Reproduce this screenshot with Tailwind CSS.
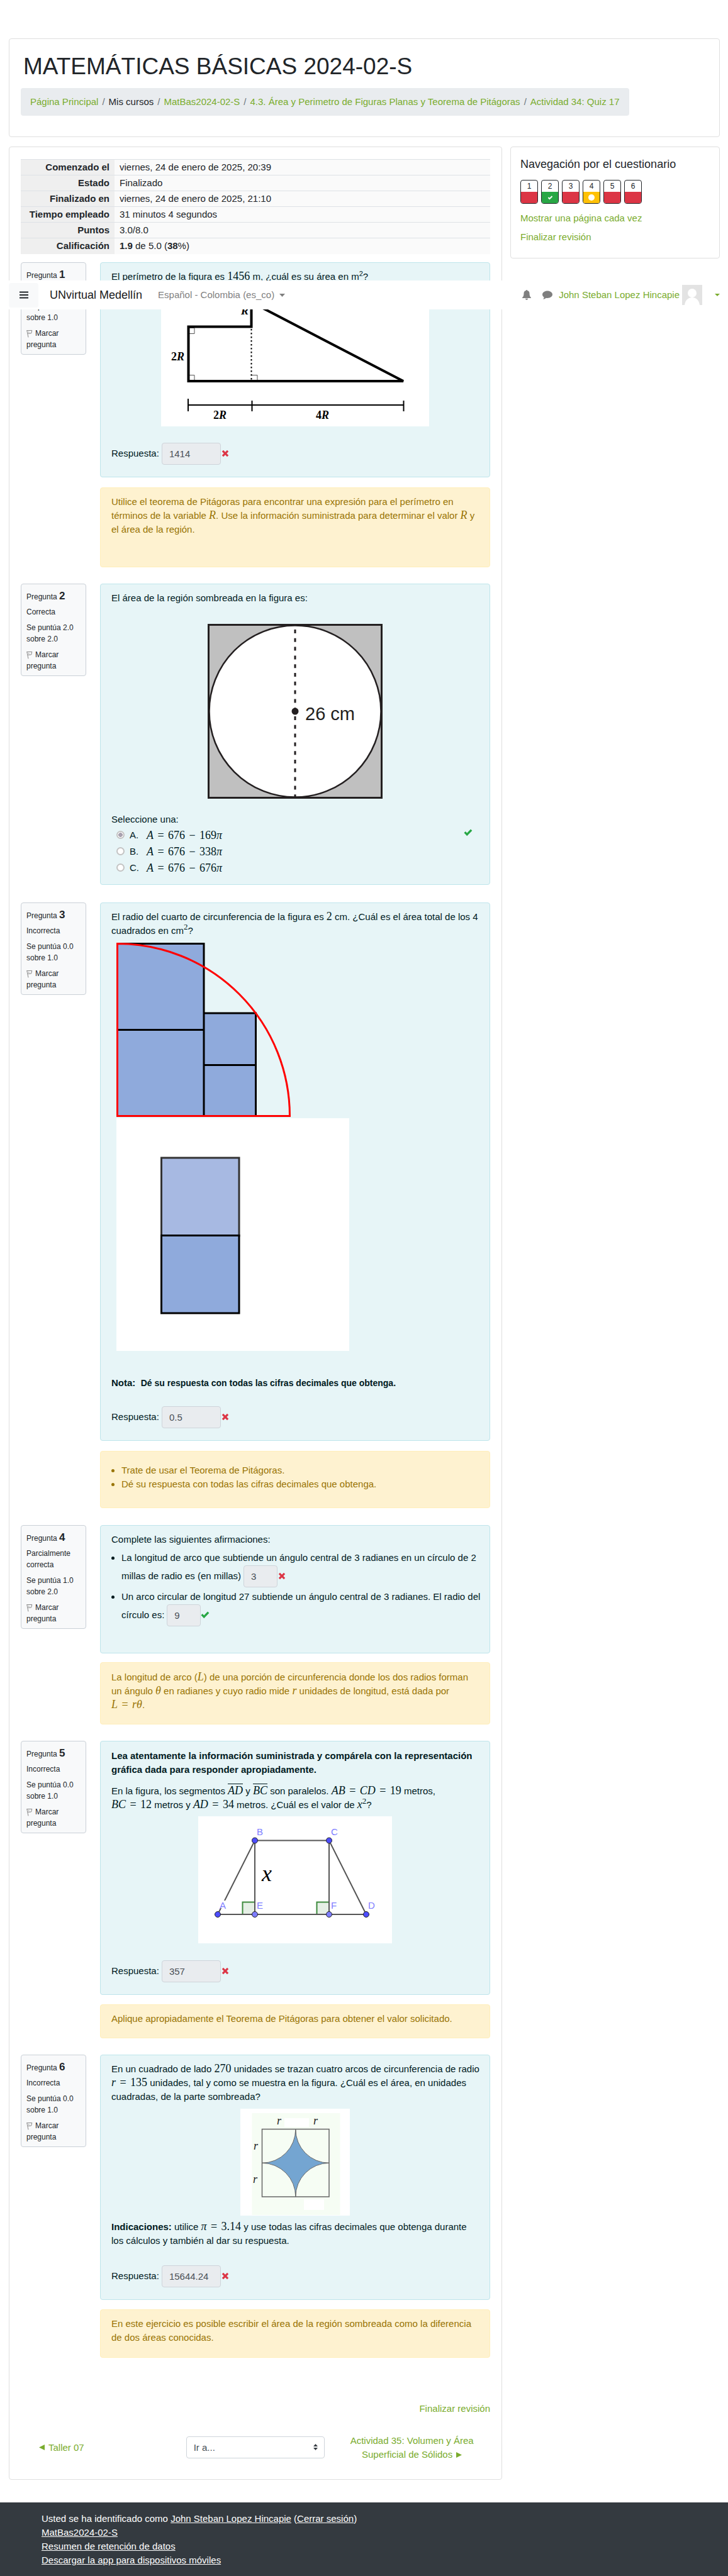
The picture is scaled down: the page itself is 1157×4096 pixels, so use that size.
<!DOCTYPE html>
<html lang="es">
<head>
<meta charset="utf-8">
<title>Actividad 34: Quiz 17</title>
<script src="https://cdn.jsdelivr.net/npm/@tailwindcss/browser@4"></script>
</head>
<body class="bg-white font-['Liberation_Sans',Arial,sans-serif] text-[15px] leading-[22px] text-[#212529]">
<svg class="hidden" aria-hidden="true">
  <symbol id="cross" viewBox="0 0 12 12"><path d="M3 0.8 6 3.8 9 0.8 11.2 3 8.2 6 11.2 9 9 11.2 6 8.2 3 11.2 0.8 9 3.8 6 0.8 3Z" fill="currentColor"/></symbol>
  <symbol id="check" viewBox="0 0 14 12"><path d="M0.5 6.3 2.8 4 5.2 6.4 11 0.6 13.4 2.8 5.2 11.2Z" fill="currentColor"/></symbol>
  <symbol id="flag" viewBox="0 0 10 13"><path d="M0.7 1 3 12.4M1 1.6 8.8 1.4 7.6 6 2.2 6.4M3.6 3.4 4 5.2" fill="none" stroke="#888" stroke-width="1"/></symbol>
</svg>
<div class="relative pt-[61px]">

<nav class="absolute inset-x-0 top-[446px] z-10 flex h-[46px] items-center bg-white pl-[14px] pr-[13px]">
  <button type="button" aria-label="Panel lateral" class="flex h-[39px] w-[47px] items-center justify-center rounded bg-[#f8f9fa]">
    <svg class="h-3 w-[14px]" viewBox="0 0 14 12"><path d="M0 1.5H14M0 6H14M0 10.5H14" stroke="#212529" stroke-width="2"/></svg>
  </button>
  <a href="#" class="ml-[18px] text-lg text-[#191919]">UNvirtual Medellín</a>
  <a href="#" class="ml-[25px] flex items-center gap-2 text-[#7f7f7f]">Español - Colombia (es_co)
    <svg class="h-[5px] w-[9px]" viewBox="0 0 9 5"><path d="M0 0H9L4.5 5Z" fill="currentColor"/></svg></a>
  <div class="ml-auto flex items-center">
    <button type="button" aria-label="Notificaciones" class="mr-[18px]"><svg class="h-4 w-[14px]" viewBox="0 0 14 16"><path d="M7 0C7.700 0 8 .5 8 1.100 10.300 1.600 11.500 3.300 11.500 5.500 11.500 9.500 12.600 11 14 12.200V13H0V12.200C1.400 11 2.500 9.500 2.500 5.500 2.500 3.300 3.700 1.600 6 1.100 6 .5 6.300 0 7 0ZM5 13.700H9C9 15 8.100 15.800 7 15.800 5.900 15.800 5 15 5 13.700Z" fill="#7f7f7f"/></svg></button>
    <button type="button" aria-label="Mensajes" class="mr-[10px]"><svg class="h-[14px] w-4" viewBox="0 0 16 14"><path d="M8 .5C12.400.5 16 3 16 6.200S12.400 11.900 8 11.900C7.300 11.900 6.600 11.800 5.900 11.700 4.600 12.900 3 13.500 1.200 13.700 2 12.800 2.500 11.800 2.600 10.600 1 9.500 0 8 0 6.200 0 3 3.600.5 8 .5Z" fill="#7f7f7f"/></svg></button>
    <a href="#" class="flex items-center gap-1 text-[#7aac2e]">John Steban Lopez Hincapie
      <svg class="h-8 w-8" viewBox="0 0 32 32"><path d="M0 0H32V32H0Z" fill="#e3e3e3"/><circle cx="16" cy="13" r="7" fill="#fff"/><path d="M4 32C5 24 10 20 16 20S27 24 28 32Z" fill="#fff"/></svg>
      <svg class="ml-4 h-1 w-2" viewBox="0 0 8 4"><path d="M0 0H8L4 4Z" fill="currentColor"/></svg></a>
  </div>
</nav>

<div class="pl-[14px] pr-[13px]">
<header class="rounded border border-[#dfdfdf] px-[18px] pb-[33px] pt-[22px]">
  <h1 class="mb-3 pl-1 text-[37px] leading-[44px]">MATEMÁTICAS BÁSICAS 2024-02-S</h1>
  <nav class="inline-flex h-11 items-center gap-1.5 whitespace-nowrap rounded bg-[#e9ecef] px-[15px] align-top text-[#7aac2e]">
    <a href="#">Página Principal</a><span class="text-[#6c757d]">/</span>
    <span class="text-[#212529]">Mis cursos</span><span class="text-[#6c757d]">/</span>
    <a href="#">MatBas2024-02-S</a><span class="text-[#6c757d]">/</span>
    <a href="#">4.3. Área y Perimetro de Figuras Planas y Teorema de Pitágoras</a><span class="text-[#6c757d]">/</span>
    <a href="#">Actividad 34: Quiz 17</a>
  </nav>
</header>

<div class="mt-[15px] flex items-start gap-[13px]">
<main class="min-w-0 flex-1 rounded border border-[#dfdfdf] px-[18px] pb-[28px] pt-[19px]">
  <table class="w-full table-fixed border-collapse">
    <tbody>
    <tr class="h-[25px] border-t border-[#dee2e6]"><th class="w-[149px] bg-[#efefef] pr-2 text-right font-bold">Comenzado el</th><td class="bg-[#fafafa] pl-2">viernes, 24 de enero de 2025, 20:39</td></tr>
    <tr class="h-[25px] border-t border-[#dee2e6]"><th class="bg-[#efefef] pr-2 text-right font-bold">Estado</th><td class="bg-[#fafafa] pl-2">Finalizado</td></tr>
    <tr class="h-[25px] border-t border-[#dee2e6]"><th class="bg-[#efefef] pr-2 text-right font-bold">Finalizado en</th><td class="bg-[#fafafa] pl-2">viernes, 24 de enero de 2025, 21:10</td></tr>
    <tr class="h-[25px] border-t border-[#dee2e6]"><th class="bg-[#efefef] pr-2 text-right font-bold">Tiempo empleado</th><td class="bg-[#fafafa] pl-2">31 minutos 4 segundos</td></tr>
    <tr class="h-[25px] border-t border-[#dee2e6]"><th class="bg-[#efefef] pr-2 text-right font-bold">Puntos</th><td class="bg-[#fafafa] pl-2">3.0/8.0</td></tr>
    <tr class="h-[25px] border-t border-[#dee2e6]"><th class="bg-[#efefef] pr-2 text-right font-bold">Calificación</th><td class="bg-[#fafafa] pl-2"><b>1.9</b> de 5.0 (<b>38</b>%)</td></tr>
    </tbody>
  </table>

  <!-- Pregunta 1 -->
  <section class="mt-[13px] flex items-start gap-[22px]">
    <div class="w-[104px] shrink-0 rounded-sm border border-[#cad0d7] bg-[#f8f9fa] pb-1.5 pl-2 pt-2.5 text-xs leading-[18px]">
      <h3 class="mb-1.5">Pregunta <b class="text-[17px] leading-none">1</b></h3>
      <p class="mb-[7px]">Incorrecta</p>
      <p class="mb-[7px]">Se puntúa 0.0<br>sobre 1.0</p>
      <a href="#" class="block"><svg class="mr-1 inline h-[13px] w-2.5 align-[-3px]"><use href="#flag"/></svg>Marcar<br>pregunta</a>
    </div>
    <div class="min-w-0 flex-1 whitespace-nowrap">
      <div class="rounded border border-[#bee5eb] bg-[#e7f5f7] px-[17px] pb-[19px] pt-[11px] text-[#001a1e]">
        <p>El perímetro de la figura es <span class="font-['Liberation_Serif',serif] text-lg leading-none">1456</span> m, ¿cuál es su área en m<sup class="text-[11px]">2</sup>?</p>
        <svg class="mx-auto block h-[227px] w-[426px]" viewBox="0 0 426 227" font-family="Liberation Serif" font-weight="bold" font-size="18">
          <path d="M0 0H426V227H0Z" fill="#fff"/>
          <path d="M43.500 70.500H53V79.500H43.500M43.500 145.500H53V155M143.500 145.500H153V155" fill="none" stroke="#555" stroke-width="1"/>
          <path d="M43.500 155V68.500H143.500V29.500L385 155Z" fill="none" stroke="#000" stroke-width="4"/>
          <path d="M143.500 72V155" stroke="#000" stroke-width="2" stroke-dasharray="2.500 3.500"/>
          <path d="M43 193H385.500" stroke="#000" stroke-width="2"/>
          <path d="M43 183V203M144.500 186V203M385.500 186V203" stroke="#000" stroke-width="2"/>
          <text x="16" y="122">2<tspan font-style="italic">R</tspan></text>
          <text x="127" y="49" font-style="italic">R</text>
          <text x="83" y="215">2<tspan font-style="italic">R</tspan></text>
          <text x="246" y="215">4<tspan font-style="italic">R</tspan></text>
        </svg>
        <div class="mt-[26px] flex items-center"><label for="a1">Respuesta:</label><input id="a1" readonly value="1414" class="ml-1 h-[35px] w-[94px] rounded border border-[#ced4da] bg-[#e9ecef] px-[11px] text-[#495057]"><svg class="ml-[1px] h-3 w-3 text-[#dc3545]"><use href="#cross"/></svg></div>
      </div>
      <div class="mt-4 rounded border border-[#ffeeba] bg-[#fef2d0] px-[17px] pb-[48px] pt-[11px] text-[#997404]">
        <p>Utilice el teorema de Pitágoras para encontrar una expresión para el perímetro en<br>términos de la variable <i class="font-['Liberation_Serif',serif] text-lg leading-none">R</i>. Use la información suministrada para determinar el valor <i class="font-['Liberation_Serif',serif] text-lg leading-none">R</i> y<br>el área de la región.</p>
      </div>
    </div>
  </section>

  <!-- Pregunta 2 -->
  <section class="mt-[26px] flex items-start gap-[22px]">
    <div class="w-[104px] shrink-0 rounded-sm border border-[#cad0d7] bg-[#f8f9fa] pb-1.5 pl-2 pt-2.5 text-xs leading-[18px]">
      <h3 class="mb-1.5">Pregunta <b class="text-[17px] leading-none">2</b></h3>
      <p class="mb-[7px]">Correcta</p>
      <p class="mb-[7px]">Se puntúa 2.0<br>sobre 2.0</p>
      <a href="#" class="block"><svg class="mr-1 inline h-[13px] w-2.5 align-[-3px]"><use href="#flag"/></svg>Marcar<br>pregunta</a>
    </div>
    <div class="min-w-0 flex-1 whitespace-nowrap rounded border border-[#bee5eb] bg-[#e7f5f7] px-[17px] pb-[13px] pt-[11px] text-[#001a1e]">
      <p>El área de la región sombreada en la figura es:</p>
      <svg class="mx-auto mb-[22px] mt-[30px] block h-[278px] w-[278px]" viewBox="0 0 278 278">
        <path d="M1.500 1.500H276.500V276.500H1.500Z" fill="#c0c0c0" stroke="#231f20" stroke-width="3"/>
        <circle cx="139" cy="139" r="136.500" fill="#fff" stroke="#231f20" stroke-width="2.500"/>
        <path d="M139 9V276" stroke="#231f20" stroke-width="3" stroke-dasharray="6 7.800"/>
        <circle cx="139" cy="139" r="5.500" fill="#231f20"/>
        <text x="155" y="153" font-family="Liberation Sans" font-size="29" fill="#231f20">26 cm</text>
      </svg>
      <fieldset class="relative">
        <legend>Seleccione una:</legend>
        <div class="mt-px flex h-[26px] items-center pl-2"><input type="radio" name="q2" id="q2a" disabled checked class="h-[13px] w-[13px] appearance-none rounded-full border-2 border-[#c3c3c3] bg-white checked:bg-[radial-gradient(#a9a2b0_50%,#fff_56%)]"><label for="q2a" class="ml-2 flex"><span class="w-[27px]">A.</span><span class="font-['Liberation_Serif',serif] text-lg leading-[22px]"><i>A</i> <span class="inline-block w-[14px] text-center">=</span> 676 <span class="inline-block w-[14px] text-center">−</span> 169<i>π</i></span></label></div>
        <div class="flex h-[26px] items-center pl-2"><input type="radio" name="q2" id="q2b" disabled class="h-[13px] w-[13px] appearance-none rounded-full border-2 border-[#c3c3c3] bg-white"><label for="q2b" class="ml-2 flex"><span class="w-[27px]">B.</span><span class="font-['Liberation_Serif',serif] text-lg leading-[22px]"><i>A</i> <span class="inline-block w-[14px] text-center">=</span> 676 <span class="inline-block w-[14px] text-center">−</span> 338<i>π</i></span></label></div>
        <div class="flex h-[26px] items-center pl-2"><input type="radio" name="q2" id="q2c" disabled class="h-[13px] w-[13px] appearance-none rounded-full border-2 border-[#c3c3c3] bg-white"><label for="q2c" class="ml-2 flex"><span class="w-[27px]">C.</span><span class="font-['Liberation_Serif',serif] text-lg leading-[22px]"><i>A</i> <span class="inline-block w-[14px] text-center">=</span> 676 <span class="inline-block w-[14px] text-center">−</span> 676<i>π</i></span></label></div>
        <svg class="absolute right-2.5 top-1 h-3 w-[14px] text-[#28a745]"><use href="#check"/></svg>
      </fieldset>
    </div>
  </section>

  <!-- Pregunta 3 -->
  <section class="mt-[28px] flex items-start gap-[22px]">
    <div class="w-[104px] shrink-0 rounded-sm border border-[#cad0d7] bg-[#f8f9fa] pb-1.5 pl-2 pt-2.5 text-xs leading-[18px]">
      <h3 class="mb-1.5">Pregunta <b class="text-[17px] leading-none">3</b></h3>
      <p class="mb-[7px]">Incorrecta</p>
      <p class="mb-[7px]">Se puntúa 0.0<br>sobre 1.0</p>
      <a href="#" class="block"><svg class="mr-1 inline h-[13px] w-2.5 align-[-3px]"><use href="#flag"/></svg>Marcar<br>pregunta</a>
    </div>
    <div class="min-w-0 flex-1 whitespace-nowrap">
      <div class="rounded border border-[#bee5eb] bg-[#e7f5f7] px-[17px] pb-[19px] pt-[11px] text-[#001a1e]">
        <p>El radio del cuarto de circunferencia de la figura es <span class="font-['Liberation_Serif',serif] text-lg leading-none">2</span> cm. ¿Cuál es el área total de los 4<br>cuadrados en cm<sup class="font-['Liberation_Serif',serif] text-[13px]">2</sup>?</p>
        <svg class="ml-2 mt-2 block h-[277px] w-[277px]" viewBox="0 0 277 277">
          <path d="M1.500 1.500H139V275.500H1.500ZM139 112H221.500V275.500H139Z" fill="#8faadc" stroke="#000" stroke-width="3"/>
          <path d="M1.500 138.500H139M139 194.500H221.500" stroke="#000" stroke-width="3"/>
          <path d="M1.500 1.500A274 274 0 0 1 275.500 275.500H1.500Z" fill="none" stroke="#f00" stroke-width="3"/>
        </svg>
        <svg class="ml-2 mt-0.5 block h-[370px] w-[370px]" viewBox="0 0 370 370">
          <path d="M0 0H370V370H0Z" fill="#fff"/>
          <path d="M71.500 63H195V187H71.500Z" fill="#a7b9e2" stroke="#333" stroke-width="3"/>
          <path d="M71.500 186.500H195V310H71.500Z" fill="#8faadc" stroke="#000" stroke-width="3"/>
        </svg>
        <p class="mt-[40px] font-bold">Nota:&nbsp; <span class="text-sm leading-none">Dé su respuesta con todas las cifras decimales que obtenga.</span></p>
        <div class="mt-[26px] flex items-center"><label for="a3">Respuesta:</label><input id="a3" readonly value="0.5" class="ml-1 h-[35px] w-[94px] rounded border border-[#ced4da] bg-[#e9ecef] px-[11px] text-[#495057]"><svg class="ml-[1px] h-3 w-3 text-[#dc3545]"><use href="#cross"/></svg></div>
      </div>
      <div class="mt-4 rounded border border-[#ffeeba] bg-[#fef2d0] px-[17px] pb-[26px] pt-[19px] text-[#997404]">
        <ul class="list-disc pl-4">
          <li>Trate de usar el Teorema de Pitágoras.</li>
          <li>Dé su respuesta con todas las cifras decimales que obtenga.</li>
        </ul>
      </div>
    </div>
  </section>

  <!-- Pregunta 4 -->
  <section class="mt-[27px] flex items-start gap-[22px]">
    <div class="w-[104px] shrink-0 rounded-sm border border-[#cad0d7] bg-[#f8f9fa] pb-1.5 pl-2 pt-2.5 text-xs leading-[18px]">
      <h3 class="mb-1.5">Pregunta <b class="text-[17px] leading-none">4</b></h3>
      <p class="mb-[7px]">Parcialmente<br>correcta</p>
      <p class="mb-[7px]">Se puntúa 1.0<br>sobre 2.0</p>
      <a href="#" class="block"><svg class="mr-1 inline h-[13px] w-2.5 align-[-3px]"><use href="#flag"/></svg>Marcar<br>pregunta</a>
    </div>
    <div class="min-w-0 flex-1 whitespace-nowrap">
      <div class="rounded border border-[#bee5eb] bg-[#e7f5f7] px-[17px] pb-[42px] pt-[11px] text-[#001a1e]">
        <p>Complete las siguientes afirmaciones:</p>
        <ul class="mt-[7px] list-disc space-y-1 pl-4">
          <li>La longitud de arco que subtiende un ángulo central de 3 radianes en un círculo de 2
            <div class="mt-px flex items-center"><label for="a4">millas de radio es (en millas)</label><input id="a4" readonly value="3" class="ml-1 h-[35px] w-[54px] rounded border border-[#ced4da] bg-[#e9ecef] px-[11px] text-[#495057]"><svg class="ml-[1px] h-3 w-3 text-[#dc3545]"><use href="#cross"/></svg></div></li>
          <li>Un arco circular de longitud 27 subtiende un ángulo central de 3 radianes. El radio del
            <div class="mt-px flex items-center"><label for="a5">círculo es:</label><input id="a5" readonly value="9" class="ml-1 h-[35px] w-[54px] rounded border border-[#ced4da] bg-[#e9ecef] px-[11px] text-[#495057]"><svg class="h-3 w-[14px] text-[#28a745]"><use href="#check"/></svg></div></li>
        </ul>
      </div>
      <div class="mt-[14px] rounded border border-[#ffeeba] bg-[#fef2d0] px-[17px] pb-[19px] pt-3 text-[#997404]">
        <p>La longitud de arco (<i class="font-['Liberation_Serif',serif] text-lg leading-none">L</i>) de una porción de circunferencia donde los dos radios forman<br>un ángulo <i class="font-['Liberation_Serif',serif] text-lg leading-none">θ</i> en radianes y cuyo radio mide <i class="font-['Liberation_Serif',serif] text-lg leading-none">r</i> unidades de longitud, está dada por<br><span class="font-['Liberation_Serif',serif] text-lg leading-none"><i>L</i> <span class="inline-block w-[14px] text-center">=</span> <i>rθ</i></span>.</p>
      </div>
    </div>
  </section>

  <!-- Pregunta 5 -->
  <section class="mt-[26px] flex items-start gap-[22px]">
    <div class="w-[104px] shrink-0 rounded-sm border border-[#cad0d7] bg-[#f8f9fa] pb-1.5 pl-2 pt-2.5 text-xs leading-[18px]">
      <h3 class="mb-1.5">Pregunta <b class="text-[17px] leading-none">5</b></h3>
      <p class="mb-[7px]">Incorrecta</p>
      <p class="mb-[7px]">Se puntúa 0.0<br>sobre 1.0</p>
      <a href="#" class="block"><svg class="mr-1 inline h-[13px] w-2.5 align-[-3px]"><use href="#flag"/></svg>Marcar<br>pregunta</a>
    </div>
    <div class="min-w-0 flex-1 whitespace-nowrap">
      <div class="rounded border border-[#bee5eb] bg-[#e7f5f7] px-[17px] pb-[19px] pt-3 text-[#001a1e]">
        <p class="font-bold">Lea atentamente la información suministrada y compárela con la representación<br>gráfica dada para responder apropiadamente.</p>
        <p class="mt-3">En la figura, los segmentos <i class="border-t border-current font-['Liberation_Serif',serif] text-lg leading-none">AD</i> y <i class="border-t border-current font-['Liberation_Serif',serif] text-lg leading-none">BC</i> son paralelos. <span class="font-['Liberation_Serif',serif] text-lg leading-none"><i>AB</i> <span class="inline-block w-[14px] text-center">=</span> <i>CD</i> <span class="inline-block w-[14px] text-center">=</span> 19</span> metros,<br><span class="font-['Liberation_Serif',serif] text-lg leading-none"><i>BC</i> <span class="inline-block w-[14px] text-center">=</span> 12</span> metros y <span class="font-['Liberation_Serif',serif] text-lg leading-none"><i>AD</i> <span class="inline-block w-[14px] text-center">=</span> 34</span> metros. ¿Cuál es el valor de <i class="font-['Liberation_Serif',serif] text-lg leading-none">x</i><sup class="font-['Liberation_Serif',serif] text-[13px]">2</sup>?</p>
        <svg class="mx-auto mt-[7px] block h-[202px] w-[308px]" viewBox="0 0 308 202" font-family="Liberation Sans" font-size="15" fill="#7d7dff">
          <path d="M0 0H308V202H0Z" fill="#fff"/>
          <path d="M70.500 136.500H90V156H70.500ZM188.500 136.500H208V156H188.500Z" fill="#e5efe5" stroke="#3c8a3c" stroke-width="2"/>
          <path d="M31 156 90 38.500H208L267 156ZM90 38.500V156M208 38.500V156" fill="none" stroke="#555" stroke-width="2"/>
          <path d="M35 134H45V146H35Z" fill="#fff"/>
          <g stroke="#222" stroke-width="1"><circle cx="31" cy="156" r="4.500" fill="#4d4dff"/><circle cx="90" cy="156" r="4.500"/><circle cx="208" cy="156" r="4.500"/><circle cx="267" cy="156" r="4.500" fill="#4d4dff"/><circle cx="90" cy="38.500" r="4.500" fill="#4d4dff"/><circle cx="208" cy="38.500" r="4.500" fill="#4d4dff"/></g>
          <text x="93" y="30">B</text><text x="211" y="30">C</text><text x="34" y="147">A</text><text x="93" y="147">E</text><text x="211" y="147">F</text><text x="270" y="147">D</text>
          <text x="101" y="103" font-family="Liberation Serif" font-style="italic" font-size="36" fill="#000">x</text>
        </svg>
        <div class="mt-[27px] flex items-center"><label for="a6">Respuesta:</label><input id="a6" readonly value="357" class="ml-1 h-[35px] w-[94px] rounded border border-[#ced4da] bg-[#e9ecef] px-[11px] text-[#495057]"><svg class="ml-[1px] h-3 w-3 text-[#dc3545]"><use href="#cross"/></svg></div>
      </div>
      <div class="mt-[15px] rounded border border-[#ffeeba] bg-[#fef2d0] px-[17px] pb-[19px] pt-[11px] text-[#997404]">
        <p>Aplique apropiadamente el Teorema de Pitágoras para obtener el valor solicitado.</p>
      </div>
    </div>
  </section>

  <!-- Pregunta 6 -->
  <section class="mt-[26px] flex items-start gap-[22px]">
    <div class="w-[104px] shrink-0 rounded-sm border border-[#cad0d7] bg-[#f8f9fa] pb-1.5 pl-2 pt-2.5 text-xs leading-[18px]">
      <h3 class="mb-1.5">Pregunta <b class="text-[17px] leading-none">6</b></h3>
      <p class="mb-[7px]">Incorrecta</p>
      <p class="mb-[7px]">Se puntúa 0.0<br>sobre 1.0</p>
      <a href="#" class="block"><svg class="mr-1 inline h-[13px] w-2.5 align-[-3px]"><use href="#flag"/></svg>Marcar<br>pregunta</a>
    </div>
    <div class="min-w-0 flex-1 whitespace-nowrap">
      <div class="rounded border border-[#bee5eb] bg-[#e7f5f7] px-[17px] pb-[19px] pt-[11px] text-[#001a1e]">
        <p>En un cuadrado de lado <span class="font-['Liberation_Serif',serif] text-lg leading-none">270</span> unidades se trazan cuatro arcos de circunferencia de radio<br><span class="font-['Liberation_Serif',serif] text-lg leading-none"><i>r</i> <span class="inline-block w-[14px] text-center">=</span> 135</span> unidades, tal y como se muestra en la figura. ¿Cuál es el área, en unidades<br>cuadradas, de la parte sombreada?</p>
        <svg class="mx-auto mt-2 block h-[170px] w-[174px]" viewBox="0 0 174 170" font-family="Liberation Serif" font-style="italic" font-size="18" fill="#222">
          <path d="M0 0H174V170H0Z" fill="#fff"/>
          <path d="M18.500 7H158.500V169H18.500Z" fill="#f6fdf4"/>
          <path d="M70 15H109V29H70ZM101 144H133V161H101Z" fill="#fff"/>
          <path d="M34.500 32.500H141V140H34.500Z" fill="none" stroke="#666" stroke-width="1.500"/>
          <path d="M87.800 34V140M35 86.300H141" stroke="#666"/>
          <path d="M87.800 32.500A53.500 53.500 0 0 0 141 86.300 53.500 53.500 0 0 0 87.800 140 53.500 53.500 0 0 0 34.500 86.300 53.500 53.500 0 0 0 87.800 32.500Z" fill="#74a5d1" stroke="#666"/>
          <text x="58" y="25">r</text><text x="116" y="25">r</text><text x="21" y="65">r</text><text x="20" y="118">r</text>
        </svg>
        <p class="mt-[7px]"><b>Indicaciones:</b> utilice <span class="font-['Liberation_Serif',serif] text-lg leading-none"><i>π</i> <span class="inline-block w-[14px] text-center">=</span> 3.14</span> y use todas las cifras decimales que obtenga durante<br>los cálculos y también al dar su respuesta.</p>
        <div class="mt-[28px] flex items-center"><label for="a7">Respuesta:</label><input id="a7" readonly value="15644.24" class="ml-1 h-[35px] w-[94px] rounded border border-[#ced4da] bg-[#e9ecef] px-[11px] text-[#495057]"><svg class="ml-[1px] h-3 w-3 text-[#dc3545]"><use href="#cross"/></svg></div>
      </div>
      <div class="mt-[15px] rounded border border-[#ffeeba] bg-[#fef2d0] px-[17px] pb-[20px] pt-[11px] text-[#997404]">
        <p>En este ejercicio es posible escribir el área de la región sombreada como la diferencia<br>de dos áreas conocidas.</p>
      </div>
    </div>
  </section>

  <div class="mt-[70px] text-right"><a href="#" class="text-[#7aac2e]">Finalizar revisión</a></div>
  <div class="mt-[29px] grid grid-cols-3 items-center text-[#7aac2e]">
    <div class="pl-[29px]"><a href="#" class="flex items-center gap-1.5"><svg class="h-[9px] w-[9px]" viewBox="0 0 9 9"><path d="M0 4.500 9 0V9Z" fill="currentColor"/></svg>Taller 07</a></div>
    <div class="relative px-[14px]">
      <select aria-label="Ir a..." class="block h-[35px] w-full appearance-none rounded border border-[#ced4da] bg-white px-[11px] text-[#495057]"><option>Ir a...</option></select>
      <svg class="absolute right-[25px] top-3 h-[10px] w-[7px]" viewBox="0 0 7 10"><path d="M3.500 0 7 4H0ZM3.500 10 0 6H7Z" fill="#343a40"/></svg>
    </div>
    <a href="#" class="text-center whitespace-nowrap">Actividad 35: Volumen y Área<br>Superficial de Sólidos <svg class="ml-0.5 inline h-[9px] w-[9px] align-baseline" viewBox="0 0 9 9"><path d="M9 4.500 0 0V9Z" fill="currentColor"/></svg></a>
  </div>
</main>

<aside class="w-[333px] shrink-0 rounded border border-[#dfdfdf] pb-[22px] pl-[15px] pt-4">
  <h2 class="text-lg leading-[22px]">Navegación por el cuestionario</h2>
  <div class="mt-[14px] flex gap-[5px] text-center text-xs">
    <a href="#" class="h-[38px] w-7 overflow-hidden rounded border border-[#212529]"><span class="block h-[18px] leading-[18px]">1</span><span class="block h-[18px] bg-[#dc3545]"></span></a>
    <a href="#" class="h-[38px] w-7 overflow-hidden rounded border border-[#212529]"><span class="block h-[18px] leading-[18px]">2</span><span class="flex h-[18px] items-center justify-center bg-[#28a745] text-white"><svg class="h-[7px] w-[9px]" viewBox="0 0 14 12"><use href="#check"/></svg></span></a>
    <a href="#" class="h-[38px] w-7 overflow-hidden rounded border border-[#212529]"><span class="block h-[18px] leading-[18px]">3</span><span class="block h-[18px] bg-[#dc3545]"></span></a>
    <a href="#" class="h-[38px] w-7 overflow-hidden rounded border border-[#212529]"><span class="block h-[18px] leading-[18px]">4</span><span class="flex h-[18px] items-center justify-center bg-[#ffc107]"><span class="h-[10px] w-[10px] rounded-full bg-white"></span></span></a>
    <a href="#" class="h-[38px] w-7 overflow-hidden rounded border border-[#212529]"><span class="block h-[18px] leading-[18px]">5</span><span class="block h-[18px] bg-[#dc3545]"></span></a>
    <a href="#" class="h-[38px] w-7 overflow-hidden rounded border border-[#212529]"><span class="block h-[18px] leading-[18px]">6</span><span class="block h-[18px] bg-[#dc3545]"></span></a>
  </div>
  <div class="mt-3 flex flex-col items-start gap-2 text-[#7aac2e]"><a href="#">Mostrar una página cada vez</a><a href="#">Finalizar revisión</a></div>
</aside>
</div>
</div>

<footer class="mt-[36px] bg-[#343a40] px-[66px] pb-[14px] pt-[15px] text-white">
  <p>Usted se ha identificado como <a href="#" class="underline">John Steban Lopez Hincapie</a> (<a href="#" class="underline">Cerrar sesión</a>)</p>
  <p><a href="#" class="underline">MatBas2024-02-S</a></p>
  <p><a href="#" class="underline">Resumen de retención de datos</a></p>
  <p><a href="#" class="underline">Descargar la app para dispositivos móviles</a></p>
</footer>
</div>
</body>
</html>
